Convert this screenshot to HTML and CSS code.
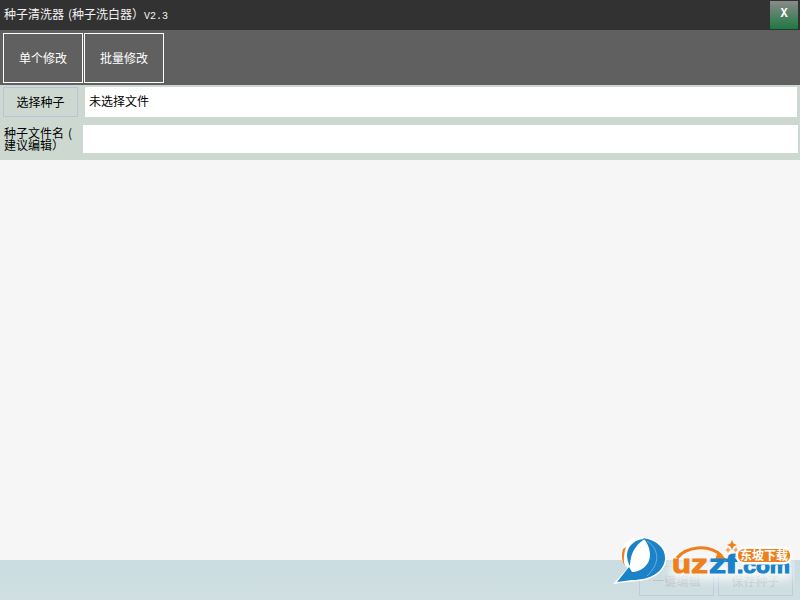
FILE: index.html
```html
<!DOCTYPE html>
<html lang="zh">
<head>
<meta charset="utf-8">
<title>种子清洗器</title>
<link rel="stylesheet" href="styles.css">
</head>
<body>
<div class="app">
  <header class="titlebar">
    <span class="title">种子清洗器<span class="paren">(</span>种子洗白器）<span class="ver">V2.3</span></span>
    <button class="close">X</button>
  </header>
  <nav class="tabs">
    <button class="tab">单个修改</button>
    <button class="tab">批量修改</button>
  </nav>
  <section class="form">
    <div class="row-file">
      <button class="pick">选择种子</button>
      <div class="file-value">未选择文件</div>
    </div>
    <div class="row-name">
      <label class="name-label">种子文件名<span class="paren">(</span><br>建议编辑）</label>
      <div class="name-input"></div>
    </div>
  </section>
  <main class="content"></main>
  <footer class="footer">
    <button class="act">一键编辑</button>
    <button class="act">保存种子</button>
    <svg class="logo" width="185" height="60" viewBox="0 0 185 60">
      <defs>
        <filter id="soft"><feGaussianBlur stdDeviation="0.3"/></filter>
        <filter id="glow" x="-20%" y="-50%" width="140%" height="200%"><feGaussianBlur stdDeviation="5"/></filter>
      </defs>
      <rect class="glow" x="60" y="25" width="122" height="20" filter="url(#glow)"/>
      <g filter="url(#soft)">
        <path class="halo" d="M33 3 C46 5 56 13 55 24 C54 36 42 45 22 45 L7 47 L20 33 C14 28 11 22 13 16 C15 8 24 3 33 3 Z"/>
        <path class="blue" d="M33 3 C46 5 56 13 55 24 C54 36 42 45 22 45 L7 47 L19 32 L22 37 C31 37 40 30 40 20 C40 13 37 7 33 3 Z"/>
        <path class="blue" d="M35 4 C26 4 18 10 17 19 C17 24 18 28 20 31 C20 24 22 17 26 12 C28 9 31 6 35 4 Z"/>
        <path class="streak" d="M37 6 C49 14 51 28 37 41"/>
        <path class="orange" d="M13 14 C11 20 12 27 15 31 C13 25 14 19 16 12 Z"/>
        <path class="arc" d="M67 23 C76 12 98 8 112 21"/>
        <path class="orange" d="M108 16 L117 25 L105 25 Z"/>
        <path class="orange" d="M122 5 l1.500 3.500 l3.500 1.500 l-3.500 1.500 l-1.500 3.500 l-1.500 -3.500 l-3.500 -1.500 l3.500 -1.500 Z"/>
        <path class="star" d="M118 12 l1 2 l2 1 l-2 1 l-1 2 l-1 -2 l-2 -1 l2 -1 Z"/>
        <path class="star" d="M126 12 l1 2 l2 1 l-2 1 l-1 2 l-1 -2 l-2 -1 l2 -1 Z"/>
      </g>
      <text class="logo-l logo-or" x="62" y="38" textLength="19" lengthAdjust="spacingAndGlyphs">u</text>
      <text class="logo-l logo-or" x="81" y="38" textLength="17" lengthAdjust="spacingAndGlyphs">z</text>
      <text class="logo-l logo-bl" x="99" y="38" textLength="17" lengthAdjust="spacingAndGlyphs">z</text>
      <text class="logo-l logo-bl" x="115" y="38" textLength="13" lengthAdjust="spacingAndGlyphs">f</text>
      <text class="logo-s logo-bl" x="127" y="38" textLength="53" lengthAdjust="spacingAndGlyphs">.com</text>
      <g filter="url(#soft)">
        <rect class="halo" x="127" y="13" width="54" height="15" rx="7"/>
        <rect class="orange" x="128" y="14" width="52" height="13" rx="6"/>
      </g>
      <text class="logo-cn" x="130" y="25" textLength="48" lengthAdjust="spacingAndGlyphs">东坡下载</text>
    </svg>
  </footer>
</div>
</body>
</html>
```

FILE: styles.css
```css
* { box-sizing: border-box; }
html, body { margin: 0; padding: 0; }
body { font-family: "Noto Sans CJK SC", "Liberation Sans", sans-serif; font-size: 12px; }
button { font: inherit; padding: 0 0 2px; cursor: default; }
.app { width: 800px; height: 600px; display: flex; flex-direction: column; overflow: hidden; background: #f6f6f6; }

.titlebar { height: 30px; background: #323232; color: #f2f2f2; display: flex; align-items: center; justify-content: space-between; padding: 0 2px 0 4px; flex: none; }
.title { font-size: 12px; line-height: 30px; }
.paren { display: inline-block; width: 8px; text-align: right; }
.ver { font-family: "Liberation Mono", monospace; font-size: 10px; }
.close { width: 28px; height: 28px; margin-bottom: 1px; border: 0; background: linear-gradient(#8a8a8a, #1c7a42); color: #fff; font-family: "Liberation Mono", monospace; font-size: 12px; font-weight: bold; }

.tabs { height: 55px; background: #606060; display: flex; gap: 1px; padding: 3px 0 2px 3px; flex: none; }
.tab { width: 80px; height: 50px; border: 1px solid #fff; background: #606060; color: #fff; }

.form { background: #cdd9d0; flex: none; height: 75px; display: flex; flex-direction: column; }
.row-file { height: 32px; padding: 2px 3px 0 3px; display: flex; gap: 7px; }
.pick { width: 75px; height: 30px; border: 1px solid #b9c4dc; background: #cdd9d0; color: #000; }
.file-value { flex: 1; height: 30px; background: #fff; color: #000; padding-left: 4px; line-height: 28px; }
.row-name { height: 43px; padding: 8px 2px 0 4px; display: flex; gap: 4px; }
.name-label { width: 75px; height: 28px; line-height: 12px; color: #000; padding-top: 2px; white-space: nowrap; }
.name-input { flex: 1; height: 28px; background: #fff; }

.content { flex: 1; background: #f6f6f6; }

.footer { height: 40px; flex: none; background: linear-gradient(#cbdce0, #cfdfe2); position: relative; display: flex; justify-content: flex-end; align-items: flex-end; gap: 4px; padding: 0 7px 4px 0; }
.act { width: 75px; height: 30px; border: 1px solid #c3c9e0; background: transparent; color: #bcc3c7; }

.logo { position: absolute; left: 610px; top: -25px; }
.glow { fill: #fff; opacity: .8; }
.halo { fill: #fff; stroke: #fff; stroke-width: 3; }
.blue { fill: #1b82c8; }
.orange { fill: #ef7f1a; }
.star { fill: #f3a45c; }
.arc { fill: none; stroke: #ef7f1a; stroke-width: 3; }
.streak { fill: none; stroke: #7dbbe6; stroke-width: 1; opacity: .8; }
.logo-cn { font-size: 12px; font-weight: 700; fill: #fff; font-family: "Noto Sans CJK SC", sans-serif; }
.logo-l { font-size: 26px; font-weight: 700; font-family: "Liberation Sans", sans-serif; stroke-width: 1; paint-order: stroke; }
.logo-s { font-size: 21px; font-weight: 700; font-family: "Liberation Sans", sans-serif; stroke-width: 1; paint-order: stroke; }
.logo-or { fill: #ef7f1a; stroke: #ef7f1a; }
.logo-bl { fill: #1b82c8; stroke: #1b82c8; }
```
